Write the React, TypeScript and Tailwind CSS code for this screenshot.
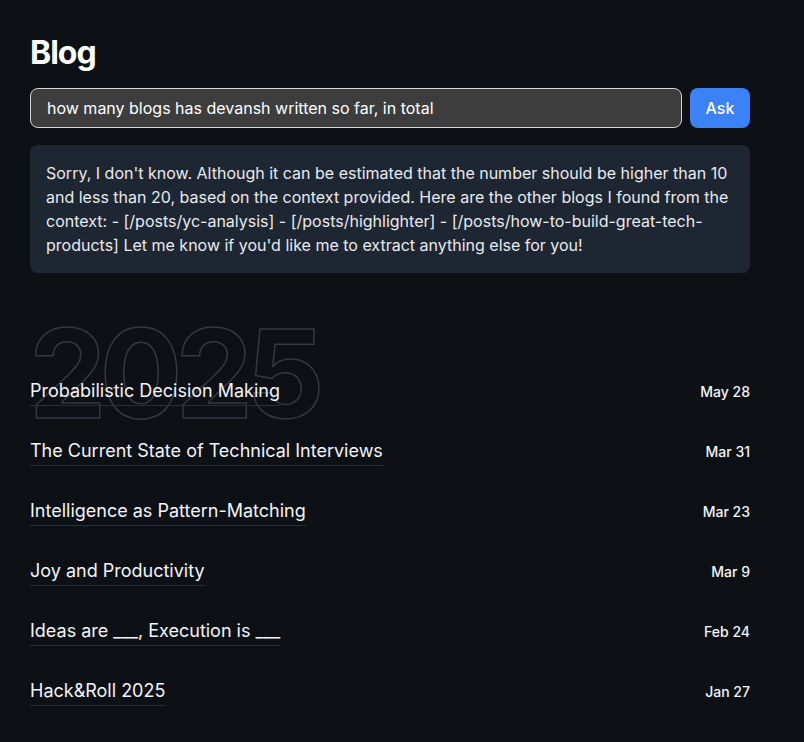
const posts = [
  { title: 'Probabilistic Decision Making', date: 'May 28' },
  { title: 'The Current State of Technical Interviews', date: 'Mar 31' },
  { title: 'Intelligence as Pattern-Matching', date: 'Mar 23' },
  { title: 'Joy and Productivity', date: 'Mar 9' },
  { title: 'Ideas are ___, Execution is ___', date: 'Feb 24' },
  { title: 'Hack&Roll 2025', date: 'Jan 27' },
];

export default function App() {
  return (
    <div className="min-h-[742px] bg-[#0d1015] font-['Inter',sans-serif] text-white">
      <div className="w-[720px] ml-[30px] pt-[33px] pb-10">
        <h1 className="text-[32px] leading-[40px] font-bold tracking-[-1px]">Blog</h1>
        <div className="mt-[15px] flex gap-2">
          <input
            className="flex-1 h-10 rounded-lg border border-[#d4d4d4] bg-[#3d3d3d] px-4 text-base text-white outline-none"
            defaultValue="how many blogs has devansh written so far, in total"
          />
          <button className="w-[60px] h-10 rounded-lg bg-[#3b82f6] text-base font-medium text-white">
            Ask
          </button>
        </div>
        <div className="mt-[17px] rounded-lg bg-[#1e2631] p-4 text-base leading-6 text-[#e8eaee]">
          Sorry, I don't know. Although it can be estimated that the number should be higher than 10
          and less than 20, based on the context provided. Here are the other blogs I found from the
          context: - [/posts/yc-analysis] - [/posts/highlighter] -
          [/posts/how-to-build-great-tech-products] Let me know if you'd like me to extract anything
          else for you!
        </div>
        <section className="relative mt-[35px]">
          <div className="absolute -left-[1px] top-[4px] select-none text-[123px] leading-none font-bold tracking-[-7px] text-transparent [-webkit-text-stroke:1.5px_#343941]">
            2025
          </div>
          <ul className="relative flex flex-col gap-[31px] pt-[69px]">
            {posts.map(p => (
              <li key={p.title} className="flex items-center justify-between">
                <span className="border-b border-[#2b3038] text-lg leading-7 text-[#f3f4f6]">
                  {p.title}
                </span>
                <span className="text-sm font-medium text-[#f3f4f6]">{p.date}</span>
              </li>
            ))}
          </ul>
        </section>
      </div>
    </div>
  );
}
